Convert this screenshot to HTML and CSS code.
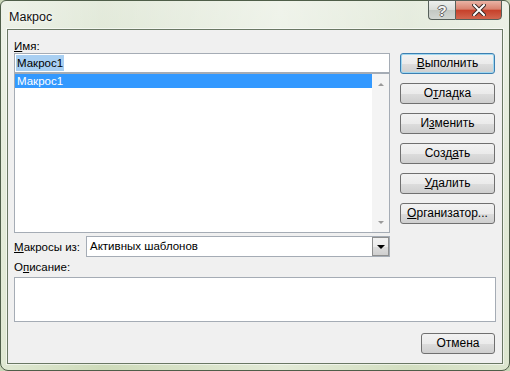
FILE: index.html
```html
<!DOCTYPE html>
<html lang="ru">
<head>
    <meta charset="UTF-8">
    <title>Макрос</title>
    <link rel="stylesheet" href="styles.css">
</head>
<body>
    <div class="window">
        <div class="titlebar">
            <span class="title">Макрос</span>
            <div class="caption-btns">
                <div class="cap-btn help">?</div>
                <div class="cap-btn close">
                    <svg width="14" height="12" viewBox="0 0 14 12">
                        <path d="M2 1 L12 11 M12 1 L2 11" stroke="#3a2a26" stroke-width="4" stroke-linecap="square"/>
                        <path d="M2 1 L12 11 M12 1 L2 11" stroke="#ffffff" stroke-width="2" stroke-linecap="square"/>
                    </svg>
                </div>
            </div>
        </div>
        <div class="client">
            <div class="top">
                <div class="left">
                    <div class="label"><u>И</u>мя:</div>
                    <div class="name-input"><span class="sel">Макрос1</span></div>
                    <div class="list">
                        <div class="list-items">
                            <div class="item selected">Макрос1</div>
                        </div>
                        <div class="scrollbar">
                            <span class="arrow up"></span>
                            <span class="arrow down"></span>
                        </div>
                    </div>
                    <div class="source-row">
                        <div class="label"><u>М</u>акросы из:</div>
                        <div class="combo">
                            <span class="combo-text">Активных шаблонов</span>
                            <div class="combo-btn"><span class="combo-arrow"></span></div>
                        </div>
                    </div>
                </div>
                <div class="buttons">
                    <button class="btn default"><u>В</u>ыполнить</button>
                    <button class="btn">О<u>т</u>ладка</button>
                    <button class="btn">И<u>з</u>менить</button>
                    <button class="btn">Созд<u>а</u>ть</button>
                    <button class="btn"><u>У</u>далить</button>
                    <button class="btn"><u>О</u>рганизатор...</button>
                </div>
            </div>
            <div class="label desc-label">О<u>п</u>исание:</div>
            <div class="desc"></div>
            <div class="footer">
                <button class="btn cancel">Отмена</button>
            </div>
        </div>
    </div>
</body>
</html>
```

FILE: styles.css
```css
* {
    box-sizing: border-box;
}
body {
    margin: 0;
    width: 510px;
    height: 371px;
    overflow: hidden;
    font-family: "Liberation Sans", Arial, sans-serif;
    font-size: 11.5px;
    color: #000;
    background: #c9d6b8;
}
.window {
    width: 510px;
    height: 371px;
    border: 1px solid #4f5e49;
    border-radius: 6px 6px 8px 8px;
    padding: 0 6px 6px 6px;
    display: flex;
    flex-direction: column;
    background:
        linear-gradient(90deg, rgba(255,255,255,0.4), rgba(255,255,255,0.05) 20%, rgba(255,255,255,0.45) 55%, rgba(255,255,255,0.15) 80%, rgba(255,255,255,0.35)),
        linear-gradient(180deg, #e3eadb 0%, #d6e1c7 40%, #cbd9b6 100%);
}
.titlebar {
    height: 28px;
    display: flex;
    justify-content: space-between;
    align-items: flex-start;
    margin-right: 1px;
}
.title {
    font-size: 12.5px;
    padding: 9px 0 0 2px;
    color: #111;
    text-shadow: 0 0 6px #fff, 0 0 3px #fff;
}
.caption-btns {
    display: flex;
    margin-top: -1px;
}
.cap-btn {
    height: 20px;
    border: 1px solid #56605a;
    display: flex;
    align-items: center;
    justify-content: center;
}
.help {
    width: 27px;
    border-right: none;
    border-radius: 0 0 0 4px;
    background: linear-gradient(180deg, #eef0ee 0%, #d9dcd9 50%, #c3c8c3 51%, #d2d6d2 100%);
    color: #f4f4f4;
    font-size: 15px;
    font-weight: bold;
    text-shadow: 1px 0 0 #666, -1px 0 0 #666, 0 1px 0 #666, 0 -1px 0 #666;
}
.close {
    width: 47px;
    border-radius: 0 0 4px 0;
    background: linear-gradient(180deg, #eab3a5 0%, #d9826f 45%, #c6412b 52%, #d2664f 100%);
}
.client {
    flex: 1;
    border: 1px solid #6a7864;
    box-shadow: 0 0 0 1px rgba(255,255,255,0.55);
    background: #f0f0f0;
    padding: 9px 6px 8px 6px;
    display: flex;
    flex-direction: column;
}
.top {
    display: flex;
    gap: 10px;
}
.left {
    width: 376px;
    display: flex;
    flex-direction: column;
}
.label {
    height: 14px;
    line-height: 14px;
}
u {
    text-decoration: underline;
    text-underline-offset: 1px;
}
.name-input {
    height: 20px;
    border: 1px solid #a5acb5;
    background: #fff;
    padding: 1px 1px;
    line-height: 16px;
}
.sel {
    background: #a8cff2;
    padding: 0 1px;
    display: inline-block;
    line-height: 16px;
}
.list {
    height: 160px;
    border: 1px solid #a5acb5;
    background: #fff;
    display: flex;
}
.list-items {
    flex: 1;
}
.item {
    height: 14px;
    line-height: 14px;
    padding-left: 2px;
}
.item.selected {
    background: #3399ff;
    color: #fff;
}
.scrollbar {
    width: 17px;
    background: #f4f4f4;
    display: flex;
    flex-direction: column;
    justify-content: space-between;
    align-items: center;
    padding: 9px 0 8px 0;
}
.arrow {
    width: 0;
    height: 0;
    border-left: 3px solid transparent;
    border-right: 3px solid transparent;
}
.arrow.up {
    border-bottom: 3px solid #9a9a9a;
}
.arrow.down {
    border-top: 3px solid #9a9a9a;
}
.source-row {
    margin-top: 3px;
    display: flex;
    align-items: center;
    justify-content: space-between;
}
.combo {
    width: 304px;
    height: 21px;
    border: 1px solid #a5acb5;
    background: #fff;
    display: flex;
    align-items: stretch;
}
.combo-text {
    flex: 1;
    padding-left: 3px;
    line-height: 19px;
}
.combo-btn {
    width: 17px;
    border: 1px solid #8e8f8f;
    background: linear-gradient(180deg, #f2f2f2 0%, #ebebeb 50%, #dddddd 51%, #cfcfcf 100%);
    display: flex;
    align-items: center;
    justify-content: center;
}
.combo-arrow {
    width: 0;
    height: 0;
    border-left: 4px solid transparent;
    border-right: 4px solid transparent;
    border-top: 4px solid #000;
}
.buttons {
    margin-top: 14px;
    display: flex;
    flex-direction: column;
    gap: 9px;
}
.btn {
    width: 95px;
    height: 21px;
    padding: 0;
    border: 1px solid #707070;
    border-radius: 3px;
    background: linear-gradient(180deg, #f2f2f2 0%, #ebebeb 50%, #dddddd 51%, #cfcfcf 100%);
    font-family: "Liberation Sans", Arial, sans-serif;
    font-size: 12px;
    color: #000;
    line-height: 19px;
}
.btn.default {
    border-color: #3c7fb1;
    box-shadow: inset 0 0 0 1px #9fd7f0;
}
.desc-label {
    margin-top: 3px;
}
.desc {
    margin-top: 3px;
    height: 45px;
    border: 1px solid #a5acb5;
    background: #fff;
}
.footer {
    margin-top: 11px;
    display: flex;
    justify-content: flex-end;
    padding-right: 1px;
}
.btn.cancel {
    width: 74px;
}
```
